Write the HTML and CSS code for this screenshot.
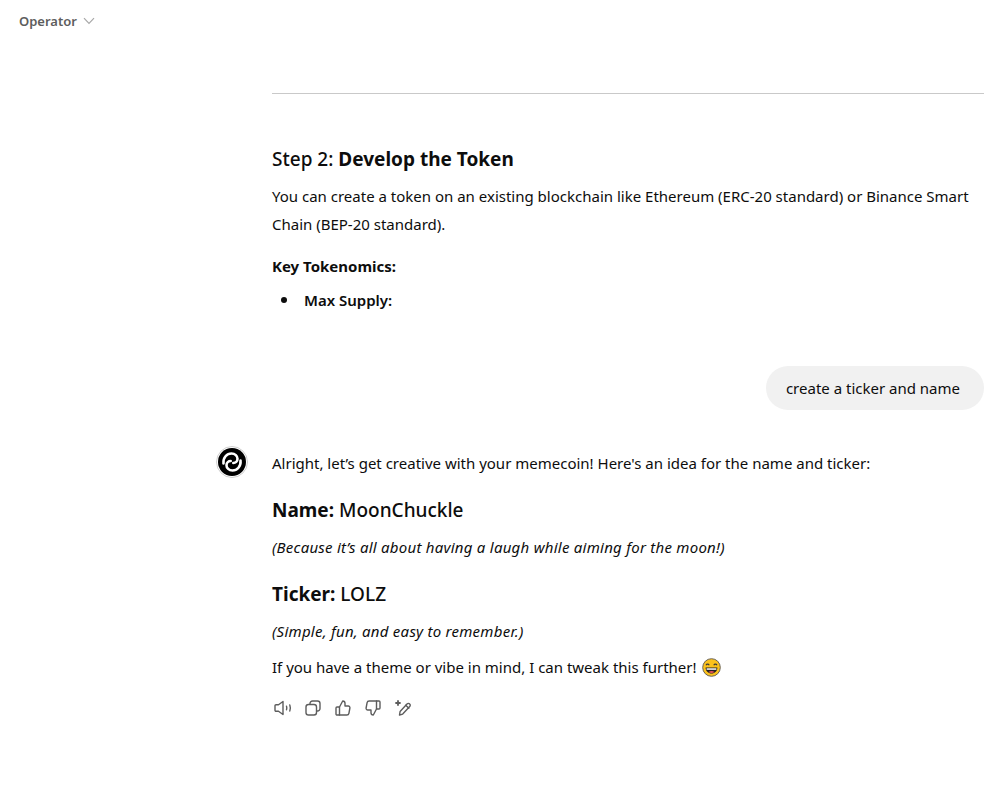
FILE: index.html
```html
<!DOCTYPE html>
<html lang="en">
<head>
    <title>Operator</title>
    <link rel="stylesheet" href="styles.css">
</head>
<body>
    <div class="top-bar">
        <span class="model-name">Operator</span>
        <svg class="chevron" width="12" height="8" viewBox="0 0 12 8" fill="none" stroke="#a8a8a8" stroke-width="1.2"><path d="M1 1.2l5 5.2 5-5.2"/></svg>
    </div>
    <div class="chat">
        <hr class="divider">
        <h3 class="step-title">Step 2: <strong>Develop the Token</strong></h3>
        <p class="tall">You can create a token on an existing blockchain like Ethereum (ERC-20 standard) or Binance Smart Chain (BEP-20 standard).</p>
        <p class="key-title"><strong>Key Tokenomics:</strong></p>
        <ul class="key-list">
            <li><strong>Max Supply:</strong></li>
        </ul>

        <div class="user-row">
            <div class="bubble">create a ticker and name</div>
        </div>

        <div class="reply">
            <div class="avatar">
                <svg width="32" height="32" viewBox="0 0 32 32">
                    <circle cx="16" cy="16" r="15.5" fill="#fff" stroke="#cfcfcf"/>
                    <circle cx="16" cy="16" r="14" fill="#000"/>
                    <path d="M7.5 17.5C6.8 11.5 11 7.5 15.5 7.5c3.6 0 6 2.6 6 5.3 0 2.6-2 4.2-4.2 4.2" fill="none" stroke="#fff" stroke-width="2.6" stroke-linecap="round"/>
                    <path d="M24.5 14.5c.7 6-3.5 10-8 10-3.6 0-6-2.6-6-5.3 0-2.6 2-4.2 4.2-4.2" fill="none" stroke="#fff" stroke-width="2.6" stroke-linecap="round"/>
                </svg>
            </div>
            <p>Alright, let’s get creative with your memecoin! Here's an idea for the name and ticker:</p>
            <h3 class="pick"><strong>Name:</strong> MoonChuckle</h3>
            <p><em>(Because it’s all about having a laugh while aiming for the moon!)</em></p>
            <h3 class="pick"><strong>Ticker:</strong> LOLZ</h3>
            <p><em>(Simple, fun, and easy to remember.)</em></p>
            <p class="closing">If you have a theme or vibe in mind, I can tweak this further!
                <svg class="emoji" width="19" height="19" viewBox="0 0 19 19">
                    <circle cx="9.5" cy="9.5" r="8.8" fill="#fcc21b" stroke="#6b6355" stroke-width="1"/>
                    <path d="M4 7.2c.6-1.5 2.6-1.5 3.2 0M11.8 7.2c.6-1.5 2.6-1.5 3.2 0" fill="none" stroke="#3a3a3a" stroke-width="1.1"/>
                    <path d="M3.6 9.6h11.8c0 3.6-2.6 6-5.9 6s-5.9-2.4-5.9-6z" fill="#222"/>
                    <path d="M4.6 10.3h9.8v1.5h-9.8z" fill="#fff"/>
                    <path d="M6.5 14c1.5-1.2 4.5-1.2 6 0-1.7 1.2-4.3 1.2-6 0z" fill="#e8505b"/>
                </svg>
            </p>
            <div class="actions">
                <svg width="20" height="20" viewBox="0 0 20 20" fill="none" stroke="#5d5d5d" stroke-width="1.4" stroke-linejoin="round" stroke-linecap="round"><path d="M3 6.8h2.5l4.5-3.3v13l-4.5-3.3h-2.5a1 1 0 0 1-1-1v-4.4a1 1 0 0 1 1-1z"/><path d="M13.5 8.2c.4 1.1.4 2.5 0 3.6M16.8 7c.7 1.9.7 4.1 0 6"/></svg>
                <svg width="20" height="20" viewBox="0 0 20 20" fill="none" stroke="#5d5d5d" stroke-width="1.4" stroke-linejoin="round"><rect x="3" y="6.5" width="10.5" height="10.5" rx="2.5"/><path d="M7 6.5v-1a2.5 2.5 0 0 1 2.5-2.5h5a2.5 2.5 0 0 1 2.5 2.5v5a2.5 2.5 0 0 1-2.5 2.5h-1"/></svg>
                <svg width="20" height="20" viewBox="0 0 20 20" fill="none" stroke="#5d5d5d" stroke-width="1.4" stroke-linejoin="round" stroke-linecap="round"><path d="M6.5 9v8h-2.5a1 1 0 0 1-1-1v-6a1 1 0 0 1 1-1z"/><path d="M6.5 9l3.2-6c1.4 0 2.3 1 2.3 2.3v2.7h3.3c1 0 1.8 1 1.6 2l-1 5.3c-.2 1-1 1.7-2 1.7h-7.4"/></svg>
                <svg width="20" height="20" viewBox="0 0 20 20" fill="none" stroke="#5d5d5d" stroke-width="1.4" stroke-linejoin="round" stroke-linecap="round"><path d="M13.5 11v-8h2.5a1 1 0 0 1 1 1v6a1 1 0 0 1-1 1z"/><path d="M13.5 11l-3.2 6c-1.4 0-2.3-1-2.3-2.3v-2.7h-3.3c-1 0-1.8-1-1.6-2l1-5.3c.2-1 1-1.7 2-1.7h7.4"/></svg>
                <svg width="20" height="20" viewBox="0 0 20 20" fill="none" stroke="#5d5d5d" stroke-width="1.4" stroke-linejoin="round" stroke-linecap="round"><path d="M6.5 17l.6-3.5 6.9-7.5c.8-.8 2-.8 2.7 0 .7.7.7 1.9 0 2.6l-7 7.5z"/><path d="M12.8 7.3l3 3"/><path d="M5 3v4M3 5h4" stroke-width="1.8"/></svg>
            </div>
        </div>
    </div>
</body>
</html>
```

FILE: styles.css
```css
body {
    font-family: "Noto Sans", "Open Sans", sans-serif;
    font-size: 15px;
    color: #0d0d0d;
    background-color: #ffffff;
    margin: 0;
}

.top-bar {
    display: flex;
    align-items: center;
    gap: 6px;
    padding: 10px 19px 0;
    height: 21px;
}

.model-name {
    font-size: 13px;
    font-weight: 600;
    color: #5d5d5d;
}

.chat {
    margin: 62px 12px 0 272px;
}

.divider {
    border: none;
    border-top: 1px solid #c9c9c9;
    margin: 0 0 51px;
}

p {
    margin: 0;
    line-height: 28px;
}

h3 {
    margin: 0;
    font-weight: 500;
    font-size: 19px;
}

.step-title {
    line-height: 28px;
    margin-bottom: 9px;
}

.tall {
    margin-bottom: 14px;
}

.key-list {
    list-style: none;
    margin: 6px 0 0;
    padding-left: 9px;
    line-height: 28px;
}

.key-list li {
    display: flex;
    align-items: center;
    gap: 17px;
}

.key-list li::before {
    content: "";
    width: 6px;
    height: 6px;
    border-radius: 50%;
    background-color: #0d0d0d;
}

.key-list strong {
    font-weight: 600;
}

.user-row {
    display: flex;
    justify-content: flex-end;
    margin-top: 52px;
}

.bubble {
    background-color: #f1f1f1;
    border-radius: 22px;
    padding: 10px 24px 10px 20px;
    line-height: 24px;
}

.reply {
    position: relative;
    margin-top: 39px;
}

.avatar {
    position: absolute;
    left: -56px;
    top: -3px;
    width: 32px;
    height: 32px;
}

.pick {
    line-height: 28px;
    margin: 19px 0 9px;
}

.reply em {
    font-style: italic;
    letter-spacing: 0.25px;
}

.reply p + p {
    margin-top: 6px;
}

.reply .closing {
    display: flex;
    align-items: center;
    gap: 5px;
    margin-top: 8px;
}

.actions {
    display: flex;
    gap: 10px;
    margin-top: 17px;
    margin-left: 1px;
}
```
